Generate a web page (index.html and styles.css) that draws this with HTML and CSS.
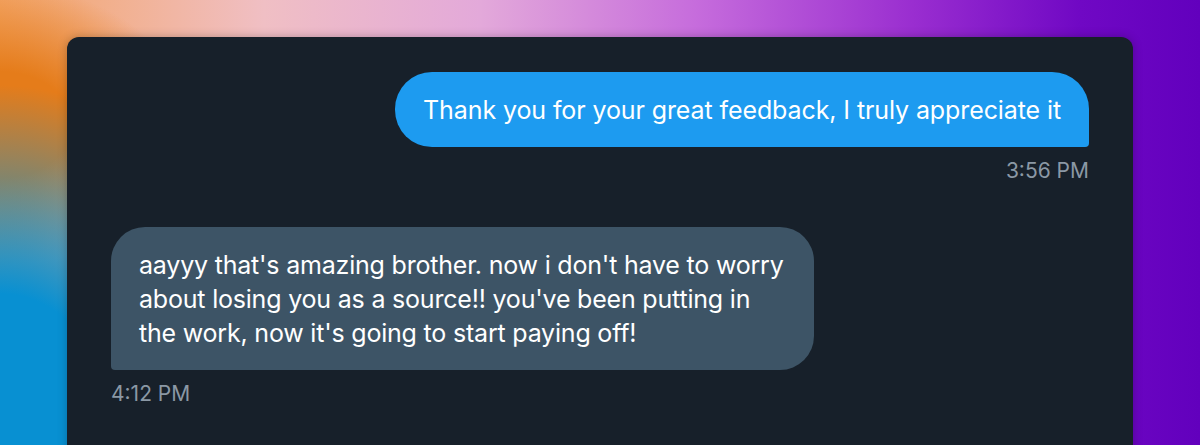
FILE: index.html
```html
<!DOCTYPE html>
<html lang="en">
<head>
<meta charset="utf-8">
<title>Messages</title>
<link rel="stylesheet" href="styles.css">
</head>
<body>
  <main class="card">
    <div class="msg msg-out">
      <div class="bubble bubble-out">Thank you for your great feedback, I truly appreciate it</div>
      <div class="time">3:56 PM</div>
    </div>
    <div class="msg msg-in">
      <div class="bubble bubble-in">aayyy that's amazing brother. now i don't have to worry about losing you as a source!! you've been putting in the work, now it's going to start paying off!</div>
      <div class="time">4:12 PM</div>
    </div>
  </main>
</body>
</html>
```
FILE: styles.css
```css
html, body {
  margin: 0;
  padding: 0;
  height: 100%;
  overflow: hidden;
}

body {
  font-family: "Inter", "Liberation Sans", sans-serif;
  background:
    radial-gradient(ellipse 280px 360px at 0% 100%, #0890d2 42%, rgba(8,144,210,0) 100%),
    radial-gradient(ellipse 190px 140px at 0% 125px, #e57c1a 38%, rgba(229,124,26,0) 100%),
    linear-gradient(90deg, #f3a566 0%, #f0bfc4 22%, #e3a9da 40%, #c66cdc 58%, #9a2ed0 76%, #7008c4 90%, #6200bd 100%);
  padding: 37px 67px 0;
  box-sizing: border-box;
}

.card {
  background: #17202a;
  border-radius: 12px 12px 0 0;
  height: 420px;
  padding: 35px 44px 0;
  box-sizing: border-box;
  display: flex;
  flex-direction: column;
  gap: 42px;
  box-shadow: 0 0 10px rgba(0, 0, 0, 0.25);
}

.msg {
  display: flex;
  flex-direction: column;
}

.msg-out {
  align-items: flex-end;
}

.msg-in {
  align-items: flex-start;
}

.bubble {
  box-sizing: border-box;
  padding: 20.5px 28px;
  font-size: 25px;
  line-height: 34px;
  color: #ffffff;
}

.bubble-out {
  background: #1d9bf0;
  border-radius: 37px 37px 4px 37px;
  letter-spacing: -0.1px;
}

.bubble-in {
  background: #3d5466;
  border-radius: 34px 34px 34px 4px;
  max-width: 703px;
  letter-spacing: -0.2px;
}

.time {
  margin-top: 10px;
  font-size: 21px;
  line-height: 28px;
  color: #8b98a5;
}
```
